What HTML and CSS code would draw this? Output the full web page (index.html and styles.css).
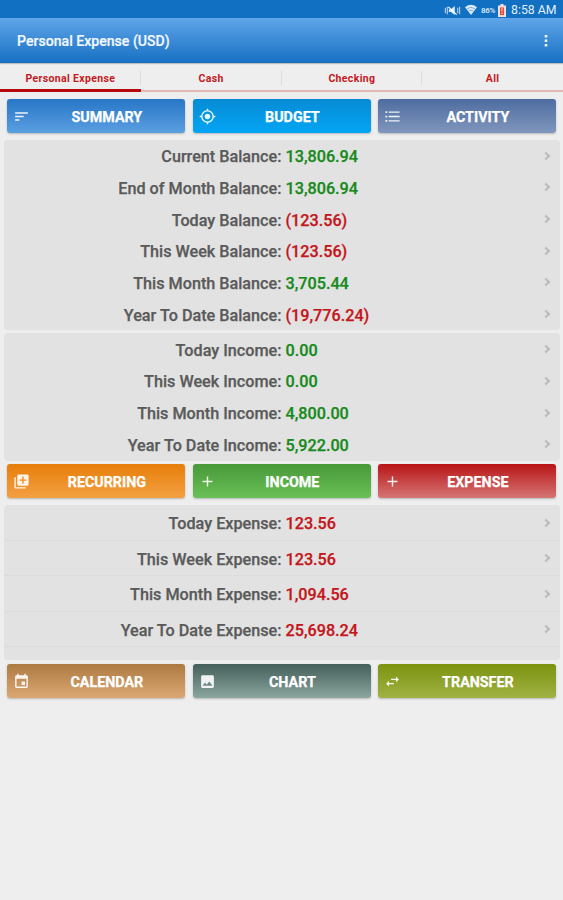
FILE: index.html
```html
<!DOCTYPE html>
<html lang="en">
<head>
<meta charset="utf-8">
<title>Personal Expense</title>
<link rel="stylesheet" href="styles.css">
</head>
<body>
<div class="status">
  <svg class="vibrate" viewBox="0 0 17 12"><path d="M.7 3v6M2.8 2v8M14.2 3v6M16.3 2v8" stroke="#c4dcf1" stroke-width="1.1"/><path d="M4.5 4.5h2.2L11 1v10L6.700 7.500H4.500z" fill="#dceaf7"/><path d="M4 2l9 8.500" stroke="#fff" stroke-width="1.300"/></svg>
  <svg class="wifi" viewBox="0 0 12 12"><path d="M0 3.200Q6-1.500 12 3.200L6 11z" fill="#d9e9f7"/><path d="M2 4.800q4-3 8 0M3.700 7q2.300-1.600 4.600 0" fill="none" stroke="#5a9bd4" stroke-width=".7"/></svg>
  <span class="percent">86%</span>
  <svg class="battery" viewBox="0 0 8 13"><path d="M2.500 0h3v1.500H8V13H0V1.500h2.500z" fill="#f3dfdc"/><path d="M2 3.500h4V11H2z" fill="#df493d"/><path d="M4 4v3.500M4 8.500V10" stroke="#fff" stroke-width=".8"/></svg>
  <span class="time">8:58 AM</span>
</div>
<header class="appbar">
  <h1>Personal Expense (USD)</h1>
  <svg class="more" viewBox="0 0 4 12"><path d="M.7 0h2.600v2.600H.7zM.7 4.500h2.600v2.600H.7zM.7 9h2.600v2.600H.7z" fill="#eef6fd"/></svg>
</header>
<nav class="tabs">
  <a class="tab active">Personal Expense</a><a class="tab">Cash</a><a class="tab">Checking</a><a class="tab">All</a>
</nav>
<main>
  <div class="buttons">
    <div class="btn summary"><svg viewBox="0 0 24 24"><path d="M3 18h6v-2H3v2zM3 6v2h18V6H3zm0 7h12v-2H3v2z"/></svg><span>SUMMARY</span></div>
    <div class="btn budget"><svg viewBox="0 0 24 24"><path d="M12 8c-2.210 0-4 1.790-4 4s1.790 4 4 4 4-1.790 4-4-1.790-4-4-4zm8.940 3c-.46-4.170-3.770-7.480-7.940-7.940V1h-2v2.060C6.830 3.520 3.520 6.830 3.060 11H1v2h2.060c.46 4.170 3.770 7.480 7.940 7.940V23h2v-2.060c4.170-.46 7.480-3.770 7.940-7.940H23v-2h-2.060zM12 19c-3.870 0-7-3.130-7-7s3.130-7 7-7 7 3.130 7 7-3.130 7-7 7z"/></svg><span>BUDGET</span></div>
    <div class="btn activity"><svg viewBox="0 0 24 24"><path d="M2 4.500h2.500v2.500H2zM2 10.800h2.500v2.500H2zM2 17h2.500v2.500H2zM6.500 4.800h15.500v2H6.500zM6.500 11h15.500v2H6.500zM6.500 17.200h15.500v2H6.500z"/></svg><span>ACTIVITY</span></div>
  </div>
  <section class="panel balances">
    <div class="row"><b>Current Balance:</b><em class="up">13,806.94</em><i></i></div>
    <div class="row"><b>End of Month Balance:</b><em class="up">13,806.94</em><i></i></div>
    <div class="row"><b>Today Balance:</b><em class="down">(123.56)</em><i></i></div>
    <div class="row"><b>This Week Balance:</b><em class="down">(123.56)</em><i></i></div>
    <div class="row"><b>This Month Balance:</b><em class="up">3,705.44</em><i></i></div>
    <div class="row"><b>Year To Date Balance:</b><em class="down">(19,776.24)</em><i></i></div>
  </section>
  <section class="panel incomes">
    <div class="row"><b>Today Income:</b><em class="up">0.00</em><i></i></div>
    <div class="row"><b>This Week Income:</b><em class="up">0.00</em><i></i></div>
    <div class="row"><b>This Month Income:</b><em class="up">4,800.00</em><i></i></div>
    <div class="row"><b>Year To Date Income:</b><em class="up">5,922.00</em><i></i></div>
  </section>
  <div class="buttons">
    <div class="btn recurring"><svg viewBox="0 0 24 24"><path d="M4 6H2v14c0 1.100.9 2 2 2h14v-2H4V6zm16-4H8c-1.100 0-2 .9-2 2v12c0 1.100.9 2 2 2h12c1.100 0 2-.9 2-2V4c0-1.100-.9-2-2-2zm-1 9h-4v4h-2v-4H9V9h4V5h2v4h4v2z"/></svg><span>RECURRING</span></div>
    <div class="btn income"><svg viewBox="0 0 24 24"><path d="M19 13h-6v6h-2v-6H5v-2h6V5h2v6h6z"/></svg><span>INCOME</span></div>
    <div class="btn expense"><svg viewBox="0 0 24 24"><path d="M19 13h-6v6h-2v-6H5v-2h6V5h2v6h6z"/></svg><span>EXPENSE</span></div>
  </div>
  <section class="panel expenses">
    <div class="row"><b>Today Expense:</b><em class="down">123.56</em><i></i></div>
    <div class="row"><b>This Week Expense:</b><em class="down">123.56</em><i></i></div>
    <div class="row"><b>This Month Expense:</b><em class="down">1,094.56</em><i></i></div>
    <div class="row"><b>Year To Date Expense:</b><em class="down">25,698.24</em><i></i></div>
  </section>
  <div class="buttons">
    <div class="btn calendar"><svg viewBox="0 0 24 24"><path d="M17 12h-5v5h5v-5zM16 1v2H8V1H6v2H5c-1.110 0-1.990.9-1.990 2L3 19c0 1.100.89 2 2 2h14c1.100 0 2-.9 2-2V5c0-1.100-.9-2-2-2h-1V1h-2zm3 18H5V8h14v11z"/></svg><span>CALENDAR</span></div>
    <div class="btn chart"><svg viewBox="0 0 24 24"><path d="M21 19V5c0-1.100-.9-2-2-2H5c-1.100 0-2 .9-2 2v14c0 1.100.9 2 2 2h14c1.100 0 2-.9 2-2zM8.500 13.500l2.500 3.010L14.500 12l4.500 6H5l3.500-4.500z"/></svg><span>CHART</span></div>
    <div class="btn transfer"><svg viewBox="0 0 24 24"><path d="M6.990 11L3 15l3.990 4v-3H14v-2H6.990v-3zM21 9l-3.990-4v3H10v2h7.010v3L21 9z"/></svg><span>TRANSFER</span></div>
  </div>
</main>
</body>
</html>
```
FILE: styles.css
```css
* { box-sizing: border-box; }
body { margin: 0; height: 900px; overflow: hidden; background: #eee; font-family: Roboto, sans-serif; }
.status { height: 18px; background: #1170c1; display: flex; align-items: center; justify-content: flex-end; padding: 2px 7px 0 0; color: #e3effa; }
.vibrate { width: 17px; height: 11px; margin-right: 4px; }
.wifi { width: 12px; height: 12px; margin-right: 4px; }
.percent { font-size: 8px; width: 15px; letter-spacing: -.3px; margin-right: 2px; font-weight: 500; }
.battery { width: 8px; height: 13px; margin-right: 5px; }
.time { font-size: 12.300px; line-height: 16px; width: 45px; white-space: nowrap; }
.appbar { height: 45px; background: linear-gradient(#5fa5e8, #1770c4); display: flex; align-items: center; justify-content: space-between; padding: 0 15px 0 17px; box-shadow: 0 1px 1px #bbb; }
.appbar h1 { margin: 1px 0 0; font-size: 14.100px; line-height: 16px; font-weight: 500; color: #f2f8fe; -webkit-text-stroke: .2px; }
.more { width: 4px; height: 12px; }
.tabs { height: 29px; display: grid; grid-template-columns: repeat(4, 1fr); padding-top: 1px; }
.tab { height: 28px; border-bottom: 2px solid #e2b9b5; text-align: center; font-size: 10.500px; letter-spacing: .35px; font-weight: 700; line-height: 29px; color: #c41a1e; background: linear-gradient(#ddd, #ddd) right 7px / 1px 14px no-repeat; }
.tab:last-child { background: none; }
.tab.active { border-bottom: 3px solid #b60a0e; }
main { padding: 7px 4px 0; }
.buttons { display: grid; grid-template-columns: repeat(3, 178px); gap: 7.500px; padding-left: 3.400px; height: 34px; }
.btn { border-radius: 3px; display: flex; align-items: center; color: #fff; box-shadow: 0 1px 2px #8888; padding-left: 6px; }
.btn svg { width: 17px; height: 17px; fill: #ffffffe6; flex: none; }
.btn span { flex: 1; text-align: center; font-size: 14.300px; font-weight: 700; padding: 1px 2px 0 0; -webkit-text-stroke: .25px; }
.summary { background: linear-gradient(#2776c6, #5b9fe2); }
.budget { background: linear-gradient(#078bd5, #03a5f4); }
.activity { background: linear-gradient(#4d6ca0, #8097bd); }
.recurring { background: linear-gradient(#e77e0a, #f3a042); }
.income { background: linear-gradient(#479939, #6bc057); }
.expense { background: linear-gradient(#b91416, #d47675); }
.calendar { background: linear-gradient(#ad7a43, #dba873); }
.chart { background: linear-gradient(#445e59, #8ba59f); }
.transfer { background: linear-gradient(#7b930f, #a0b244); }
.panel { background: #e2e2e2; border-radius: 4px; width: 555.500px; }
.balances { height: 190px; margin: 7px 0 3px; }
.incomes { height: 128px; margin-bottom: 3px; }
.row { height: 31.670px; display: flex; align-items: center; font-size: 16.200px; padding: 2px 10px 0 0; }
.row b { width: 277.500px; text-align: right; font-weight: 500; color: #5a5a5a; -webkit-text-stroke: .25px; white-space: nowrap; }
.row em { font-style: normal; font-weight: 500; margin-left: 4px; flex: 1; -webkit-text-stroke: .25px; }
.row i { width: 6px; height: 6px; border: solid #bbb; border-width: 2px 2px 0 0; transform: rotate(45deg); margin: -2px 1px 0 0; }
.up { color: #168a1b; }
.down { color: #c4161b; }
.incomes .row { padding-top: 3px; }
.expenses { height: 155px; margin: 7px 0 4px; }
.expenses .row { height: 35.500px; padding-top: 3px; border-bottom: 1px solid #dcdcdc; }
```
